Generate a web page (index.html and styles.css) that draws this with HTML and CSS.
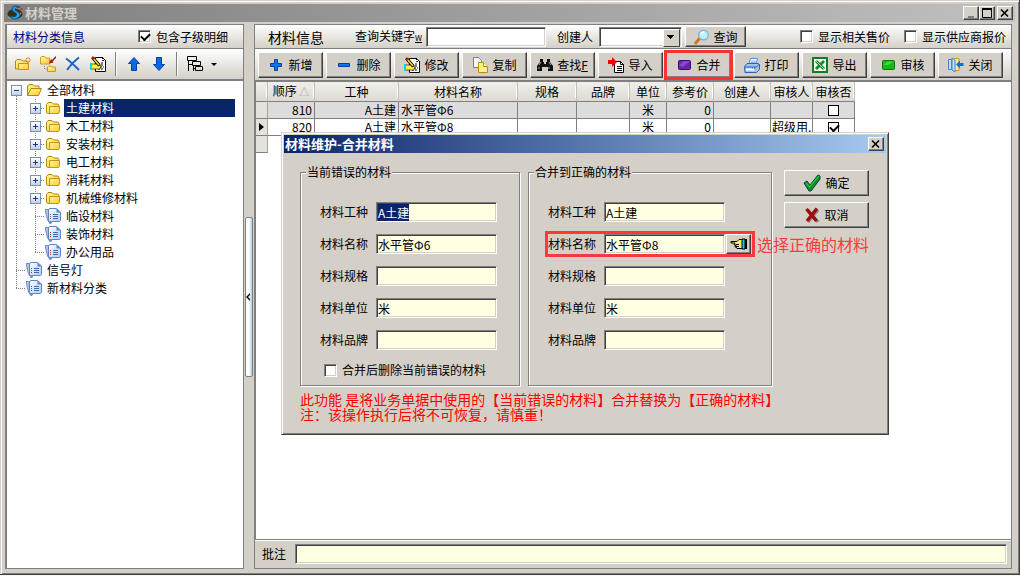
FILE: index.html
```
<!DOCTYPE html>
<html lang="zh-CN">
<head>
  <meta charset="UTF-8">
  <title>材料管理</title>
  <meta name="viewport" content="width=device-width, initial-scale=1.0" />
  <link rel="stylesheet" href="styles.css">
</head>
<body>

  <!-- icons -->
  <svg class="sprite" width="0" height="0" aria-hidden="true">
    <defs>
      <linearGradient id="gFolder" x1="0" y1="0" x2="1" y2="1">
        <stop offset="0" stop-color="#fff6a0" /><stop offset="1" stop-color="#ffcc30" />
      </linearGradient>
      <linearGradient id="gDoc" x1="0" y1="0" x2="1" y2="1">
        <stop offset="0" stop-color="#ffffff" /><stop offset="1" stop-color="#a9cdf8" />
      </linearGradient>
    </defs>
    <symbol id="folder" viewBox="0 0 16 16">
      <path d="M1.5 12.500V4.500l1.500-2h4l1.500 1.500h4.500l1 1.500v7l-1 1h-10z" fill="url(#gFolder)" stroke="#b8860b" />
      <path d="M4.500 13V6.500h10V12l-1 1.500h-8z" fill="url(#gFolder)" stroke="#c8960c" />
    </symbol>
    <symbol id="folder-open" viewBox="0 0 16 16">
      <path d="M1.500 13V4l1.500-1.500h4L8.500 4h4.500v3" fill="#ffe680" stroke="#b8860b" />
      <path d="M1.500 13.500L5 6.500h10.500L12.500 13.500z" fill="url(#gFolder)" stroke="#b8860b" />
    </symbol>
    <symbol id="doc" viewBox="0 0 16 16">
      <path d="M0 1.500h4v11l1 3L2.500 12z" fill="#a8c4f0" stroke="#6f8fc4" />
      <path d="M3.500 12V2l1-1.500h7L15.500 4v8.500l-1 1h-11z" fill="url(#gDoc)" stroke="#5f84c8" />
      <path d="M11.500.5v4h4z" fill="#5f84c8" />
      <path d="M8 6.500h5M8 8.500h5M8 10.500h5" stroke="#4468a8" />
      <path d="M5 6.500h1M5 10.500h1" stroke="#cc2222" /><path d="M5 8.500h1" stroke="#4468a8" />
      <path d="M3 13h5l-2 3H5z" fill="#6f8fc4" />
    </symbol>
    <symbol id="folder-new" viewBox="0 0 16 16">
      <path d="M.5 13V5L2 3.500h4L7.500 5h5.500v8z" fill="url(#gFolder)" stroke="#c08008" />
      <path d="M3.500 13.500V7.500h10v6z" fill="url(#gFolder)" stroke="#d09018" />
      <path d="M13 1v6M10 4h6M11 2l4 4M15 2l-4 4" stroke="#f47a3c" /><circle cx="13" cy="4" r="1.300" fill="#fff0a0" />
    </symbol>
    <symbol id="folder-move" viewBox="0 0 16 16">
      <path d="M.5 8V1.500l1-1h3L6 2h3.500v6z" fill="url(#gFolder)" stroke="#d09a20" />
      <path d="M7.500 15.500V11l1-1h2.500l1 1h3.500v4.500z" fill="url(#gFolder)" stroke="#d09a20" />
      <path d="M16 0l-4 4-1-1-2 4.500 4.500-1-1-1L16 2z" fill="#a01010" />
      <path d="M4.500 10v3h3" fill="none" stroke="#888" stroke-dasharray="1 1" />
    </symbol>
    <symbol id="cross-blue" viewBox="0 0 16 16">
      <path d="M1 2.500C6 6 10 10 14 14M14 1.500C9 5 5 10 2 14" fill="none" stroke="#1565c8" stroke-width="2" />
    </symbol>
    <symbol id="edit" viewBox="0 0 16 16">
      <path d="M5.500 1.500h7l3 3v11h-10z" fill="#fff" stroke="#000" />
      <path d="M12.500 1v3.500H16M11 7h3M11 9h3M10 11h4M8 13h6" fill="none" stroke="#000" stroke-dasharray="2 1" />
      <path d="M1 8h7l3 2-1 3H1z" fill="#ffec3c" stroke="#000" stroke-width=".6" />
      <path d="M0 7h2v7H0z" fill="#00d8e0" />
      <path d="M2.500 1.500l7 8" stroke="#000" stroke-width="3.400" /><path d="M3 2l6 7" stroke="#ffdc20" stroke-width="1.600" />
      <path d="M2 1l2 2" stroke="#d01010" stroke-width="2" />
    </symbol>
    <symbol id="arrow-up" viewBox="0 0 16 16">
      <path d="M8 1.500l5.500 6H10.500v7h-5v-7H2.500z" fill="#0a6be0" stroke="#0a3ca8" />
    </symbol>
    <symbol id="arrow-down" viewBox="0 0 16 16">
      <path d="M8 14.500l5.500-6H10.500v-7h-5v7H2.500z" fill="#0a6be0" stroke="#0a3ca8" />
    </symbol>
    <symbol id="levels" viewBox="0 0 16 16">
      <path d="M.5.500h9v4h-9zM5.500 5.500h8v4h-8zM8.500 10.500h7v4h-7zM1.500 5v10M2 8.500h3M6.500 10v5M6 12.500h2" fill="none" stroke="#000" />
    </symbol>
    <symbol id="plus" viewBox="0 0 16 16">
      <path d="M6.500 2.500h3v4h4v3h-4v4h-3v-4h-4v-3h4z" fill="#0a78e8" stroke="#0a3ca8" />
    </symbol>
    <symbol id="minus" viewBox="0 0 16 16">
      <path d="M2.500 6.500h11v3h-11z" fill="#0a78e8" stroke="#0a3ca8" />
    </symbol>
    <symbol id="copy" viewBox="0 0 16 16">
      <path d="M1.500.5h5l3 3v7h-8z" fill="#f4faff" stroke="#4a8ac8" />
      <path d="M6.500 5.500h5l4 4v6h-9z" fill="#fff08a" stroke="#c08a10" /><path d="M11.500 5.500v4h4" fill="#fff" stroke="#c08a10" />
    </symbol>
    <symbol id="binoculars" viewBox="0 0 16 16">
      <path d="M3 2h3v3h1v2h2V5h1V2h3v3l3 4v5h-5v-4H5v4H0V9l3-4z" fill="#111" />
      <path d="M2 8l2-3M12 5l2 3M1 11h2M11 11h2" stroke="#aaa" />
    </symbol>
    <symbol id="import" viewBox="0 0 16 16">
      <path d="M6.500 4.500h6l3 3v8h-9z" fill="#fff" stroke="#000" /><path d="M12.500 4.500v3h3M9 9.500h5M9 11.500h5M9 13.500h5" fill="none" stroke="#000" />
      <path d="M0 3h4V0l5 5-5 5V7H0z" fill="#f00" />
    </symbol>
    <symbol id="purple" viewBox="0 0 16 16">
      <rect x="2.500" y="3.500" width="12" height="9" rx="1" fill="#6a24a8" stroke="#3c0a70" /><path d="M3 8l5-4h6l-7 6z" fill="#8a48c4" />
    </symbol>
    <symbol id="printer" viewBox="0 0 16 16">
      <path d="M5 7l1.500-5.500h7L12 7z" fill="#fff" stroke="#5a8ad0" /><path d="M7 4h5M6.500 5.500h5" stroke="#8ab0e0" />
      <path d="M.5 9.500L3 6.500h11l1.500 1v5l-3 3H1z" fill="#9cc4f4" stroke="#2c62b8" /><path d="M1 10h11.500l3-3" fill="none" stroke="#2c62b8" />
      <path d="M2 12.500h8" stroke="#fff" stroke-width="2" /><path d="M8 11h1" stroke="#0a0" /><path d="M10 11h1.500" stroke="#e00" />
    </symbol>
    <symbol id="excel" viewBox="0 0 16 16">
      <path d="M1 1h14v14H1z" fill="#fff" stroke="#0c8020" stroke-width="2" /><path d="M4 4l8 8M12 4l-8 8" stroke="#18882c" stroke-width="3" /><path d="M4 4l8 8" stroke="#a8e0a0" />
    </symbol>
    <symbol id="green" viewBox="0 0 16 16">
      <rect x="2.500" y="3.500" width="12" height="9" rx="1" fill="#18b818" stroke="#087808" /><path d="M3.500 8l4-3.500h6L8 8z" fill="#40d840" />
    </symbol>
    <symbol id="exit" viewBox="0 0 16 16">
      <path d="M6 1.500h5v12H6" fill="#ffe69a" stroke="#d09a30" /><path d="M.5 2.500h3v10h-3zM4 1l3 2v12l-3-2z" fill="#c0e0fc" stroke="#4a84c8" />
      <path d="M15.500 7.500H10" stroke="#0a70e0" stroke-width="3" /><path d="M8 7.500l4-4v8z" fill="#0a70e0" />
    </symbol>
    <symbol id="search" viewBox="0 0 16 16">
      <path d="M1 15l5-6" stroke="#d07818" stroke-width="3" /><circle cx="9.500" cy="6" r="4.800" fill="#b8f4fc" stroke="#8ab0d8" stroke-width="1.400" /><path d="M7 5q1-2 3-2" fill="none" stroke="#fff" stroke-width="1.500" />
    </symbol>
    <symbol id="hand" viewBox="0 0 18 12">
      <path d="M1 3.500h6l2-2h4v9H7l-1-1.500H5L6 7H4l1-2H1z" fill="#ffee60" stroke="#000" /><path d="M6 6.500h3M6 8.500h3" stroke="#000" />
      <path d="M12 1h3v10h-3z" fill="#00d8e0" stroke="#000" /><path d="M16 1v10" stroke="#000" stroke-width="2" />
    </symbol>
    <symbol id="ok" viewBox="0 0 18 18">
      <path d="M1 9l3-2 3 4L15 1l2 1v3L8 17H6z" fill="#148c20" stroke="#0a3a50" /><path d="M3 9l3.500 4L16 2" fill="none" stroke="#20c830" stroke-width="1.200" />
    </symbol>
    <symbol id="cancel" viewBox="0 0 16 16">
      <path d="M4 3l10 12M14 3L4 15" stroke="#888" stroke-width="3" /><path d="M2.500 2l10 12M13 1.500L3 14" stroke="#98100c" stroke-width="3.400" />
    </symbol>
    <symbol id="logo" viewBox="0 0 16 16">
      <ellipse cx="8" cy="9" rx="7.500" ry="5" fill="#3c2c10" /><path d="M1 12q6 4 13-4" fill="none" stroke="#e09a20" stroke-width="1.500" />
      <path d="M13 2Q6-1 5 4q0 3 4 4 2 2-1 3.500-3 1-6-1 3 5 8 3 5-2 2-6L8 5q0-3 5-3z" fill="#28a0e8" stroke="#0a4c90" />
      <circle cx="14.500" cy="4" r="1" fill="#e02020" />
    </symbol>
    <symbol id="close" viewBox="0 0 10 10"><path d="M1 1.500l7 7M8 1.500l-7 7" stroke="#000" stroke-width="1.600" /></symbol>
    <symbol id="maximize" viewBox="0 0 10 10"><path d="M.5 1h9v8.500h-9z" fill="none" stroke="#000" /><path d="M0 1h10" stroke="#000" stroke-width="2" /></symbol>
    <symbol id="minimize" viewBox="0 0 10 10"><path d="M2 9h6" stroke="#808080" stroke-width="2" /></symbol>
  </svg>

  <div class="window">
    <header class="titlebar">
      <svg class="icon"><use href="#logo" /></svg>
      <h1>材料管理</h1>
      <button class="sys" aria-label="最小化"><svg><use href="#minimize" /></svg></button>
      <button class="sys" aria-label="最大化"><svg><use href="#maximize" /></svg></button>
      <button class="sys sys-close" aria-label="关闭"><svg><use href="#close" /></svg></button>
    </header>

    <div class="workspace">
      <aside class="sidebar">
        <div class="bar side-head">
          <h2>材料分类信息</h2>
          <label class="check"><input type="checkbox" checked />包含子级明细</label>
        </div>
        <div class="bar side-tools">
          <button class="tool" aria-label="新建分类"><svg class="icon"><use href="#folder-new" /></svg></button>
          <button class="tool" aria-label="移动分类"><svg class="icon"><use href="#folder-move" /></svg></button>
          <button class="tool" aria-label="删除分类"><svg class="icon"><use href="#cross-blue" /></svg></button>
          <button class="tool" aria-label="编辑分类"><svg class="icon"><use href="#edit" /></svg></button>
          <span class="sep"></span>
          <button class="tool" aria-label="上移"><svg class="icon"><use href="#arrow-up" /></svg></button>
          <button class="tool" aria-label="下移"><svg class="icon"><use href="#arrow-down" /></svg></button>
          <span class="sep"></span>
          <button class="tool" aria-label="展开级别"><svg class="icon"><use href="#levels" /></svg><i class="caret"></i></button>
        </div>
        <ul class="tree">
          <li><span class="cell root"><i class="box open"></i></span><svg class="icon"><use href="#folder-open" /></svg><span class="name">全部材料</span></li>
          <li><span class="cell line"></span><span class="cell line tee"><i class="box"></i></span><svg class="icon"><use href="#folder" /></svg><span class="name selected">土建材料</span></li>
          <li><span class="cell line"></span><span class="cell line tee"><i class="box"></i></span><svg class="icon"><use href="#folder" /></svg><span class="name">木工材料</span></li>
          <li><span class="cell line"></span><span class="cell line tee"><i class="box"></i></span><svg class="icon"><use href="#folder" /></svg><span class="name">安装材料</span></li>
          <li><span class="cell line"></span><span class="cell line tee"><i class="box"></i></span><svg class="icon"><use href="#folder" /></svg><span class="name">电工材料</span></li>
          <li><span class="cell line"></span><span class="cell line tee"><i class="box"></i></span><svg class="icon"><use href="#folder" /></svg><span class="name">消耗材料</span></li>
          <li><span class="cell line"></span><span class="cell line tee"><i class="box"></i></span><svg class="icon"><use href="#folder" /></svg><span class="name">机械维修材料</span></li>
          <li><span class="cell line"></span><span class="cell line tee"></span><svg class="icon"><use href="#doc" /></svg><span class="name">临设材料</span></li>
          <li><span class="cell line"></span><span class="cell line tee"></span><svg class="icon"><use href="#doc" /></svg><span class="name">装饰材料</span></li>
          <li><span class="cell line"></span><span class="cell tee end"></span><svg class="icon"><use href="#doc" /></svg><span class="name">办公用品</span></li>
          <li><span class="cell line tee"></span><svg class="icon"><use href="#doc" /></svg><span class="name">信号灯</span></li>
          <li><span class="cell tee end"></span><svg class="icon"><use href="#doc" /></svg><span class="name">新材料分类</span></li>
        </ul>
      </aside>

      <div class="splitter"><button class="grip" aria-label="收起"><svg width="5" height="8" viewBox="0 0 5 8"><path d="M4 0v2L2 4l2 2v2L0 4z" /></svg></button></div>

      <main class="content">
        <div class="bar main-head">
          <h2>材料信息</h2>
          <label for="keyword">查询关键字<u class="key">W</u></label>
          <input class="text keyword" id="keyword" type="text" />
          <label for="creator">创建人</label>
          <span class="combo"><select id="creator"><option></option></select></span>
          <button class="btn query"><svg class="icon"><use href="#search" /></svg>查询</button>
          <label class="check push"><input type="checkbox" />显示相关售价</label>
          <label class="check"><input type="checkbox" />显示供应商报价</label>
        </div>

        <div class="bar main-tools">
          <button class="btn"><svg class="icon"><use href="#plus" /></svg>新增</button>
          <button class="btn"><svg class="icon"><use href="#minus" /></svg>删除</button>
          <button class="btn"><svg class="icon"><use href="#edit" /></svg>修改</button>
          <button class="btn"><svg class="icon"><use href="#copy" /></svg>复制</button>
          <button class="btn"><svg class="icon"><use href="#binoculars" /></svg><span>查找<u>F</u></span></button>
          <button class="btn"><svg class="icon"><use href="#import" /></svg>导入</button>
          <button class="btn marked"><svg class="icon"><use href="#purple" /></svg>合并</button>
          <button class="btn"><svg class="icon"><use href="#printer" /></svg>打印</button>
          <button class="btn"><svg class="icon"><use href="#excel" /></svg>导出</button>
          <button class="btn"><svg class="icon"><use href="#green" /></svg>审核</button>
          <button class="btn"><svg class="icon"><use href="#exit" /></svg>关闭</button>
        </div>

        <div class="grid">
          <table>
            <colgroup>
              <col class="w-mark"><col class="w-order"><col class="w-trade"><col class="w-name"><col class="w-spec"><col class="w-brand">
              <col class="w-unit"><col class="w-price"><col class="w-creator"><col class="w-audit"><col class="w-audit">
            </colgroup>
            <thead>
              <tr><th></th><th>顺序 <span class="sort">△</span></th><th>工种</th><th>材料名称</th><th>规格</th><th>品牌</th><th>单位</th><th>参考价</th><th>创建人</th><th>审核人</th><th>审核否</th></tr>
            </thead>
            <tbody>
              <tr class="alt"><td class="mark"></td><td class="num">810</td><td class="num">A土建</td><td>水平管Φ6</td><td></td><td></td><td class="mid">米</td><td class="num">0</td><td></td><td></td><td class="mid"><input type="checkbox" aria-label="810 审核否" /></td></tr>
              <tr><td class="mark"><i class="current"></i></td><td class="num">820</td><td class="num">A土建</td><td>水平管Φ8</td><td></td><td></td><td class="mid">米</td><td class="num">0</td><td></td><td class="auditor">超级用.</td><td class="mid"><input type="checkbox" aria-label="820 审核否" checked /></td></tr>
              <tr class="blank"><td class="mark"></td><td colspan="10"></td></tr>
            </tbody>
          </table>
        </div>

        <div class="remark">
          <label for="remark">批注</label>
          <input class="text" id="remark" type="text" />
        </div>
      </main>
    </div>
  </div>

  <form class="dialog" role="dialog" aria-labelledby="dialogTitle">
    <div class="dialog-title">
      <h2 id="dialogTitle">材料维护-合并材料</h2>
      <button class="sys" type="button" aria-label="关闭"><svg><use href="#close" /></svg></button>
    </div>
    <div class="dialog-body">
      <fieldset class="wrong">
        <legend>当前错误的材料</legend>
        <div class="field"><label for="trade1">材料工种</label><input class="text" id="trade1" type="text" value="A土建" /></div>
        <div class="field"><label for="name1">材料名称</label><input class="text" id="name1" type="text" value="水平管Φ6" /></div>
        <div class="field"><label for="spec1">材料规格</label><input class="text" id="spec1" type="text" /></div>
        <div class="field"><label for="unit1">材料单位</label><input class="text" id="unit1" type="text" value="米" /></div>
        <div class="field"><label for="brand1">材料品牌</label><input class="text" id="brand1" type="text" /></div>
        <label class="check drop"><input type="checkbox" />合并后删除当前错误的材料</label>
      </fieldset>
      <fieldset class="right">
        <legend>合并到正确的材料</legend>
        <div class="field"><label for="trade2">材料工种</label><input class="text" id="trade2" type="text" value="A土建" /></div>
        <div class="field target"><label for="name2">材料名称</label><input class="text" id="name2" type="text" value="水平管Φ8" /><button class="btn pick" type="button" aria-label="选择"><svg><use href="#hand" /></svg></button><span class="note">选择正确的材料</span></div>
        <div class="field"><label for="spec2">材料规格</label><input class="text" id="spec2" type="text" /></div>
        <div class="field"><label for="unit2">材料单位</label><input class="text" id="unit2" type="text" value="米" /></div>
        <div class="field"><label for="brand2">材料品牌</label><input class="text" id="brand2" type="text" /></div>
      </fieldset>
      <div class="actions">
        <button class="btn" type="button"><svg class="icon big"><use href="#ok" /></svg>确定</button>
        <button class="btn" type="button"><svg class="icon"><use href="#cancel" /></svg>取消</button>
      </div>
    </div>
    <div class="warning">
      <p>此功能 是将业务单据中使用的【当前错误的材料】合并替换为【正确的材料】</p>
      <p>注：该操作执行后将不可恢复，请慎重！</p>
    </div>
  </form>

  <script>
    const trade = document.getElementById("trade1");
    trade.focus();
    trade.select();
  </script>

</body>
</html>
```
FILE: styles.css
```
* {
  box-sizing: border-box;
}

body {
  margin: 0;
  background: #f4f8f8;
  color: #000;
  font-family: "Noto Sans CJK SC", sans-serif;
  font-size: 12px;
  line-height: 16px;
}

h1, h2, p, ul {
  margin: 0;
  padding: 0;
  font-weight: normal;
}

button, input, select {
  font: inherit;
  color: inherit;
  margin: 0;
  padding: 0;
  outline: none;
}

label {
  white-space: nowrap;
}

.sprite {
  position: absolute;
}

.icon {
  width: 16px;
  height: 16px;
  flex: none;
}

.icon.big {
  width: 18px;
  height: 18px;
}

/* window frame */
.window {
  display: flex;
  flex-direction: column;
  height: calc(100vh - 1px);
  padding: 4px;
  background: #d4d0c8;
  border-right: 1px solid #404040;
  border-bottom: 1px solid #404040;
  box-shadow: inset 1px 1px #d4d0c8, inset 2px 2px #fff, inset -1px -1px #808080;
}

.titlebar {
  display: flex;
  align-items: center;
  height: 18px;
  padding: 0 2px 0 3px;
  background: linear-gradient(90deg, #808080, #c0c0c0);
}

.titlebar h1 {
  flex: 1;
  margin-left: 2px;
  color: #d4d0c8;
  font-size: 13px;
  font-weight: bold;
}

.sys {
  display: flex;
  align-items: center;
  justify-content: center;
  width: 16px;
  height: 14px;
  background: #d4d0c8;
  border: 1px solid;
  border-color: #fff #404040 #404040 #fff;
  box-shadow: inset -1px -1px #808080;
}

.sys svg {
  width: 10px;
  height: 10px;
}

.sys-close {
  margin-left: 2px;
}

.workspace {
  display: flex;
  flex: 1;
  min-height: 0;
  margin-top: 2px;
  padding: 0 3px 1px 1px;
}

.bar {
  display: flex;
  flex: none;
  align-items: center;
  background: linear-gradient(#fff, #d4d0c8);
  border-bottom: 1px solid #808080;
}

/* checkbox */
.check {
  display: flex;
  align-items: center;
  gap: 5px;
}

input[type="checkbox"] {
  appearance: none;
  flex: none;
  width: 13px;
  height: 13px;
  background: #fff;
  border: 1px solid;
  border-color: #808080 #fff #fff #808080;
  box-shadow: inset 1px 1px #404040, inset -1px -1px #d4d0c8;
}

input[type="checkbox"]:checked::before {
  content: "";
  display: block;
  width: 7px;
  height: 4px;
  margin: 2px;
  border: solid #000;
  border-width: 0 0 2px 2px;
  transform: rotate(-45deg);
}

/* left side */
.sidebar {
  display: flex;
  flex-direction: column;
  width: 239px;
  background: #fff;
  border: 1px solid #808080;
  border-left-width: 2px;
}

.side-head {
  height: 24px;
  padding: 0 15px 0 6px;
  justify-content: space-between;
}

.side-head h2 {
  color: #000080;
  font-size: 12px;
}

.side-tools {
  height: 32px;
  padding: 0 8px;
  gap: 9px;
  border-bottom-width: 2px;
}

.tool {
  display: flex;
  align-items: center;
  background: none;
  border: 0;
}

.sep {
  width: 2px;
  height: 24px;
  border-left: 1px solid #808080;
  border-right: 1px solid #fff;
}

.caret {
  margin-left: 8px;
  border: 3px solid transparent;
  border-top-color: #000;
  border-bottom: 0;
}

.tree {
  list-style: none;
}

.tree li {
  display: flex;
  align-items: center;
  height: 18px;
  padding-right: 8px;
}

.cell {
  display: flex;
  align-items: center;
  justify-content: center;
  width: 19px;
  height: 18px;
  background-repeat: no-repeat;
}

.root {
  background-image: repeating-linear-gradient(#808080 0 1px, transparent 1px 2px);
  background-size: 1px 9px;
  background-position: 9px 9px;
}

.line {
  background-image: repeating-linear-gradient(#808080 0 1px, transparent 1px 2px);
  background-size: 1px 18px;
  background-position: 9px 0;
}

.tee {
  background-image: repeating-linear-gradient(#808080 0 1px, transparent 1px 2px), repeating-linear-gradient(90deg, #808080 0 1px, transparent 1px 2px);
  background-size: 1px 18px, 10px 1px;
  background-position: 9px 0, 9px 9px;
}

.end {
  background-size: 1px 9px, 10px 1px;
}

.box {
  width: 11px;
  height: 11px;
  border: 1px solid #7b8fae;
  background:
    linear-gradient(#203878, #203878) 2px 4px / 5px 1px no-repeat,
    linear-gradient(#203878, #203878) 4px 2px / 1px 5px no-repeat,
    linear-gradient(#fff, #c4d0e4);
}

.box.open {
  background:
    linear-gradient(#203878, #203878) 2px 4px / 5px 1px no-repeat,
    linear-gradient(#fff, #c4d0e4);
}

.name {
  flex: 1;
  margin-left: 3px;
  padding-left: 2px;
  line-height: 18px;
}

.name.selected {
  background: #0a246a;
  color: #fff;
}

.splitter {
  display: flex;
  align-items: center;
  width: 10px;
  padding: 0 1px;
}

.grip {
  display: flex;
  align-items: center;
  width: 8px;
  height: 160px;
  background: linear-gradient(90deg, #fff 50%, #a8cce0);
  border: 1px solid #808080;
  border-radius: 2px;
}

/* right side */
.content {
  display: flex;
  flex: 1;
  flex-direction: column;
  min-width: 0;
  border: 1px solid #808080;
}

.main-head {
  height: 24px;
  padding: 0 5px 0 13px;
}

.main-head h2 {
  margin-right: 31px;
  font-size: 14px;
}

.key {
  font-size: 8px;
}

.text {
  height: 20px;
  padding: 0 1px;
  background: #ffffe1;
  border: 1px solid;
  border-color: #808080 #fff #fff #808080;
  box-shadow: inset 1px 1px #404040, inset -1px -1px #d4d0c8;
}

.text::selection {
  background: #0a246a;
  color: #fff;
}

.keyword {
  width: 120px;
  margin: 0 11px 0 4px;
  background: #fff;
}

.combo {
  display: flex;
  position: relative;
  margin: 0 3px 0 6px;
}

.combo select {
  appearance: none;
  width: 83px;
  height: 20px;
  background: #fff;
  border: 1px solid;
  border-color: #808080 #fff #fff #808080;
  border-radius: 0;
  box-shadow: inset 1px 1px #404040, inset -1px -1px #d4d0c8;
}

.combo::after {
  content: "";
  position: absolute;
  top: 2px;
  right: 2px;
  width: 15px;
  height: 16px;
  border: 1px solid;
  border-color: #fff #404040 #404040 #fff;
  background:
    linear-gradient(#000, #000) 3px 5px / 7px 1px no-repeat,
    linear-gradient(#000, #000) 4px 6px / 5px 1px no-repeat,
    linear-gradient(#000, #000) 5px 7px / 3px 1px no-repeat,
    linear-gradient(#000, #000) 6px 8px / 1px 1px no-repeat,
    #d4d0c8;
  pointer-events: none;
}

.btn {
  display: flex;
  align-items: center;
  justify-content: center;
  gap: 4px;
  height: 26px;
  background: #d4d0c8;
  border: 1px solid;
  border-color: #fff #404040 #404040 #fff;
  box-shadow: inset -1px -1px #808080;
  white-space: nowrap;
}

.query {
  width: 61px;
  height: 21px;
}

.push {
  margin-left: auto;
  margin-right: 14px;
}

.main-tools {
  height: 33px;
  padding: 0 3px;
  gap: 3px;
  border-bottom-width: 2px;
}

.main-tools .btn {
  width: 65px;
}

.main-tools .marked {
  outline: 3px solid #fa3232;
  outline-offset: -1px;
  z-index: 1;
}

.grid {
  flex: 1;
  min-height: 0;
  overflow: hidden;
  background: #fff;
  border-left: 1px solid #808080;
}

table {
  border-collapse: separate;
  border-spacing: 0;
  table-layout: fixed;
  width: 599px;
}

.w-mark { width: 12px; }
.w-order { width: 47px; }
.w-trade { width: 84px; }
.w-name { width: 119px; }
.w-spec { width: 59px; }
.w-brand { width: 53px; }
.w-unit { width: 37px; }
.w-price { width: 47px; }
.w-creator { width: 57px; }
.w-audit { width: 42px; }

th, td {
  height: 17px;
  padding: 0 2px;
  overflow: hidden;
  line-height: 16px;
  white-space: nowrap;
  border-right: 1px solid #808080;
  border-bottom: 1px solid #808080;
}

th {
  height: 19px;
  padding: 0;
  font-weight: normal;
  line-height: 18px;
  background: linear-gradient(90deg, #fff, #fff) right center / 1px 12px no-repeat, linear-gradient(#f0efe9, #dcdad2);
  border-right-color: #c4c0b8;
}

.sort {
  color: #a8a49c;
  font-size: 10px;
}

.alt td {
  background: #dcdcdc;
}

td.mark {
  padding: 0 3px;
  background: #e4e2dc;
  border-right-color: #a8a49c;
}

td.auditor {
  padding: 0 0 0 1px;
}

.current {
  display: block;
  width: 5px;
  border: 4px solid transparent;
  border-left: 5px solid #000;
  border-right: 0;
}

.num {
  text-align: right;
}

.mid {
  text-align: center;
}

.blank td:last-child {
  border: 0;
}

td input[type="checkbox"] {
  display: block;
  width: 11px;
  height: 11px;
  margin: 0 auto;
  border-color: #000;
  box-shadow: none;
}

td input[type="checkbox"]:checked::before {
  margin: 1px;
}

.remark {
  display: flex;
  align-items: center;
  gap: 9px;
  height: 29px;
  padding: 0 4px 0 7px;
  border-top: 1px solid #808080;
  box-shadow: inset 0 1px #fff;
}

.remark .text {
  flex: 1;
}

/* merge dialog, floats over the window */
.dialog {
  position: absolute;
  top: 132px;
  left: 281px;
  width: 608px;
  padding: 2px 2px 12px;
  background: #d4d0c8;
  border: 1px solid;
  border-color: #d4d0c8 #404040 #404040 #d4d0c8;
  box-shadow: inset 1px 1px #fff, inset -1px -1px #808080;
}

.dialog-title {
  display: flex;
  align-items: center;
  height: 18px;
  padding: 0 2px 0 1px;
  background: linear-gradient(90deg, #0a246a, #a6caf0);
}

.dialog-title h2 {
  flex: 1;
  color: #fff;
  font-size: 13px;
  font-weight: bold;
}

.dialog-body {
  display: flex;
  align-items: flex-start;
  padding: 11px 16px 0;
}

fieldset {
  min-width: 0;
  height: 222px;
  margin: 0 8px 0 0;
  padding: 22px 0 0 19px;
  border: 1px solid #808080;
  box-shadow: 1px 1px #fff, inset 1px 1px #fff;
}

.wrong {
  width: 220px;
}

.right {
  width: 244px;
  margin-right: 12px;
}

legend {
  margin-left: -14px;
  padding: 0 1px;
  background: #d4d0c8;
}

.field {
  display: flex;
  align-items: center;
  gap: 8px;
  height: 20px;
  margin-bottom: 12px;
}

.field .text {
  width: 121px;
}

.target {
  position: relative;
  width: 204px;
  outline: 3px solid #fa3a3a;
}

.target .pick {
  width: 25px;
  height: 20px;
  margin-left: -7px;
}

.pick svg {
  width: 18px;
  height: 12px;
}

.note {
  position: absolute;
  left: 209px;
  color: #fa3a3a;
  font-size: 16px;
  white-space: nowrap;
}

.drop {
  margin: 12px 0 0 4px;
}

.actions {
  display: flex;
  flex-direction: column;
  gap: 6px;
  padding-top: 6px;
}

.actions .btn {
  width: 85px;
}

.warning {
  padding: 6px 16px 0;
  color: #f00;
  font-size: 14px;
  line-height: 15px;
  white-space: nowrap;
}
```
